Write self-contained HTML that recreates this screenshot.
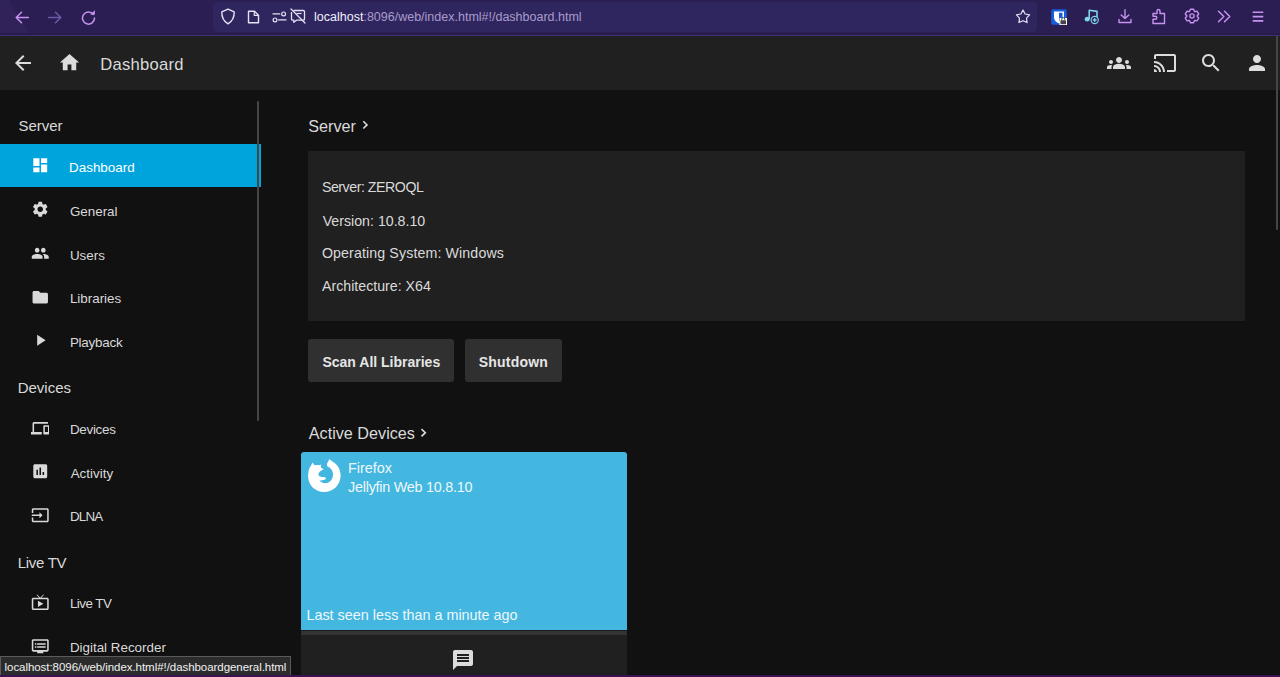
<!DOCTYPE html>
<html><head><meta charset="utf-8"><style>
html,body{margin:0;padding:0;width:1280px;height:677px;overflow:hidden;background:#111111;font-family:"Liberation Sans", sans-serif;}
svg{display:block}
</style></head><body>
<div style="position:absolute;left:0px;top:0px;width:1280px;height:35px;background:#2a1e52;"></div>
<svg style="position:absolute;left:0px;top:0px;" width="40" height="35" viewBox="0 0 40 35"><polygon points="0,0 9,0 30,35 0,35" fill="#31235a"/></svg>
<div style="position:absolute;left:0px;top:33px;width:1280px;height:2px;background:#271c4c;"></div>
<div style="position:absolute;left:0px;top:35px;width:1280px;height:1px;background:#3c3074;"></div>
<div style="position:absolute;left:213px;top:2px;width:824px;height:30px;background:#2f2660;border-radius:4px;"></div>
<svg style="position:absolute;left:15px;top:11px;" width="14" height="13" viewBox="0 0 14 13"><path d="M13.5 6.5H1.5M6.5 1.2L1.2 6.5L6.5 11.8" stroke="#c792f2" stroke-width="1.5" fill="none" stroke-linecap="round" stroke-linejoin="round"/></svg>
<svg style="position:absolute;left:48px;top:11px;" width="14" height="13" viewBox="0 0 14 13"><path d="M0.5 6.5H12.5M7.5 1.2L12.8 6.5L7.5 11.8" stroke="#6d5aa6" stroke-width="1.5" fill="none" stroke-linecap="round" stroke-linejoin="round"/></svg>
<svg style="position:absolute;left:81px;top:10px;" width="15" height="15" viewBox="0 0 15 15"><path d="M12.3 4.5A6 6 0 1 0 13.5 8" stroke="#c792f2" stroke-width="1.5" fill="none" stroke-linecap="round"/><path d="M9 4.6L13.9 4.6L13.9 0.2Z" fill="#c792f2"/></svg>
<svg style="position:absolute;left:220px;top:8px;" width="16" height="17" viewBox="0 0 16 17"><path d="M8 1.2L14.2 3.8C14.4 9.5 12 13.5 8 15.8C4 13.5 1.6 9.5 1.8 3.8Z" stroke="#e6e1f3" stroke-width="1.4" fill="none" stroke-linejoin="round"/></svg>
<svg style="position:absolute;left:247px;top:10px;" width="13" height="14" viewBox="0 0 13 14"><path d="M1.5 1.2H7.5L11.5 5.2V12.8H1.5Z" stroke="#e6e1f3" stroke-width="1.4" fill="none" stroke-linejoin="round"/><path d="M7.3 1.2V5.4H11.5" stroke="#e6e1f3" stroke-width="1.2" fill="none"/></svg>
<svg style="position:absolute;left:272px;top:11px;" width="15" height="12" viewBox="0 0 15 12"><path d="M1 2.9H7.8M6.6 8.9H14" stroke="#e6e1f3" stroke-width="1.2" fill="none" stroke-linecap="round"/><circle cx="11.6" cy="2.9" r="1.9" stroke="#e6e1f3" stroke-width="1.2" fill="none"/><circle cx="3" cy="8.9" r="1.9" stroke="#e6e1f3" stroke-width="1.2" fill="none"/></svg>
<svg style="position:absolute;left:290px;top:8px;" width="16" height="16" viewBox="0 0 16 16"><path d="M3.5 2.5H13.3C14 2.5 14.5 3 14.5 3.7V11C14.5 11.6 14 12.2 13.3 12.2H6.5L3.8 14.3V12.2H2.7C2 12.2 1.5 11.6 1.5 11V4" stroke="#e6e1f3" stroke-width="1.3" fill="none" stroke-linejoin="round"/><path d="M6.5 5.5H11.5" stroke="#e6e1f3" stroke-width="1.2"/><path d="M1 1L15 15" stroke="#e6e1f3" stroke-width="1.3" stroke-linecap="round"/></svg>
<div id="t0" style="position:absolute;left:314.10px;top:11.30px;font-size:12.5px;line-height:12.5px;color:#fff;font-weight:400;white-space:nowrap;"><span style="color:#f2eefa">localhost</span><span style="color:#a99ccb">:8096/web/index.html#!/dashboard.html</span></div>
<svg style="position:absolute;left:1012.8px;top:7.4px;" width="20" height="20" viewBox="0 0 20 20"><polygon points="10.00,3.10 12.17,7.01 16.56,7.87 13.52,11.14 14.06,15.58 10.00,13.70 5.94,15.58 6.48,11.14 3.44,7.87 7.83,7.01" stroke="#e6e1f3" stroke-width="1.2" fill="none" stroke-linejoin="round"/></svg>
<svg style="position:absolute;left:1051px;top:9px;" width="16" height="16" viewBox="0 0 16 16"><rect x="0.3" y="0.3" width="15.4" height="15.4" rx="1.5" fill="#175ddc"/><path d="M3 2.5H13V8.5C13 11.5 10.5 13.5 8 14.5C5.5 13.5 3 11.5 3 8.5Z" fill="#fff"/><path d="M8 3.8H11.5V8.6C11.5 10.6 9.8 12 8 12.8Z" fill="#175ddc"/><rect x="8.5" y="9" width="7.5" height="7" fill="#fff"/><rect x="9.5" y="11.2" width="5.5" height="4" rx="0.6" fill="#444"/><path d="M10.7 11.2V10.2A1.55 1.55 0 0 1 13.8 10.2V11.2" stroke="#444" stroke-width="1" fill="none"/></svg>
<svg style="position:absolute;left:1084px;top:9px;" width="16" height="16" viewBox="0 0 16 16"><path d="M5.2 10V1.2L13 2.4V8.5" stroke="#7fd3ea" stroke-width="1.6" fill="none" stroke-linejoin="round"/><ellipse cx="3.2" cy="10.2" rx="2.5" ry="2.4" fill="#7fd3ea"/><circle cx="10.7" cy="11" r="3.6" stroke="#7fd3ea" stroke-width="1.2" fill="#2a1e52"/><path d="M10.7 9.1V12.9M8.8 11H12.6" stroke="#7fd3ea" stroke-width="1.3"/></svg>
<svg style="position:absolute;left:1118px;top:9px;" width="14" height="15" viewBox="0 0 14 15"><path d="M7 0.8V9.5M3.2 6L7 9.6L10.8 6M1 10.5V13.5H13V10.5" stroke="#c792f2" stroke-width="1.4" fill="none" stroke-linecap="round" stroke-linejoin="round"/></svg>
<svg style="position:absolute;left:1151px;top:8px;" width="16" height="17" viewBox="0 0 16 17"><path d="M2 11.3H4.3C5.3 11.3 5.8 10.5 5.8 9.8C5.8 9 5.3 8.3 4.3 8.3H2V5.5H6V3.5C6 2.2 6.6 1.5 7.5 1.5C8.4 1.5 9 2.2 9 3.5V5.5H13.5V15.5H2Z" stroke="#c792f2" stroke-width="1.4" fill="none" stroke-linejoin="round"/></svg>
<svg style="position:absolute;left:1183.5px;top:8.3px;" width="16" height="16" viewBox="0 0 16 16"><polygon points="6.43,1.18 9.57,1.18 10.55,3.58 13.12,3.23 14.69,5.95 13.10,8.00 14.69,10.05 13.12,12.77 10.55,12.42 9.57,14.82 6.43,14.82 5.45,12.42 2.88,12.77 1.31,10.05 2.90,8.00 1.31,5.95 2.88,3.23 5.45,3.58" stroke="#c792f2" stroke-width="1.4" fill="none" stroke-linejoin="round"/><circle cx="8" cy="8" r="2.1" stroke="#c792f2" stroke-width="1.4" fill="none"/></svg>
<svg style="position:absolute;left:1217px;top:10px;" width="15" height="13" viewBox="0 0 15 13"><path d="M1.5 1.2L6.8 6.5L1.5 11.8M7.5 1.2L12.8 6.5L7.5 11.8" stroke="#c792f2" stroke-width="1.5" fill="none" stroke-linecap="round" stroke-linejoin="round"/></svg>
<svg style="position:absolute;left:1252px;top:11px;" width="12" height="11" viewBox="0 0 12 11"><path d="M0.7 1.3H11.3M0.7 5.6H11.3M0.7 9.9H11.3" stroke="#c792f2" stroke-width="1.6" fill="none"/></svg>
<div style="position:absolute;left:0px;top:36px;width:1280px;height:54px;background:#202020;"></div>
<svg style="position:absolute;left:11.2px;top:50.6px;" width="24" height="24" viewBox="0 0 24 24"><path fill="#dcdcdc" d="M20 11H7.83l5.59-5.59L12 4l-8 8 8 8 1.41-1.41L7.83 13H20v-2z"/></svg>
<svg style="position:absolute;left:57.7px;top:51.2px;" width="23" height="23" viewBox="0 0 24 24"><path fill="#dcdcdc" d="M10 20v-6h4v6h5v-8h3L12 3 2 12h3v8z"/></svg>
<div id="t1" style="position:absolute;left:100.20px;top:56.57px;font-size:16.6px;line-height:16.6px;color:#dadada;font-weight:400;white-space:nowrap;letter-spacing:0.27px;">Dashboard</div>
<svg style="position:absolute;left:1107px;top:51px;" width="24" height="24" viewBox="0 0 24 24"><path fill="#dcdcdc" d="M12 12.75c1.63 0 3.07.39 4.24.9 1.08.48 1.76 1.56 1.76 2.73V18H6v-1.61c0-1.18.68-2.26 1.76-2.73 1.17-.52 2.61-.91 4.24-.91zM4 13c1.1 0 2-.9 2-2s-.9-2-2-2-2 .9-2 2 .9 2 2 2zm1.13 1.1c-.37-.06-.74-.1-1.13-.1-.99 0-1.93.21-2.78.58C.48 14.9 0 15.62 0 16.43V18h4.5v-1.61c0-.83.23-1.61.63-2.29zM20 13c1.1 0 2-.9 2-2s-.9-2-2-2-2 .9-2 2 .9 2 2 2zm4 3.43c0-.81-.48-1.53-1.22-1.85-.85-.37-1.79-.58-2.78-.58-.39 0-.76.04-1.13.1.4.68.63 1.46.63 2.29V18H24v-1.57zM12 6c1.66 0 3 1.34 3 3s-1.34 3-3 3-3-1.34-3-3 1.34-3 3-3z"/></svg>
<svg style="position:absolute;left:1153px;top:51px;" width="24" height="24" viewBox="0 0 24 24"><path fill="#dcdcdc" d="M21 3H3c-1.1 0-2 .9-2 2v3h2V5h18v14h-7v2h7c1.1 0 2-.9 2-2V5c0-1.1-.9-2-2-2zM1 18v3h3c0-1.66-1.34-3-3-3zm0-4v2c2.76 0 5 2.24 5 5h2c0-3.87-3.13-7-7-7zm0-4v2c4.97 0 9 4.03 9 9h2c0-6.08-4.93-11-11-11z"/></svg>
<svg style="position:absolute;left:1199px;top:51px;" width="24" height="24" viewBox="0 0 24 24"><path fill="#dcdcdc" d="M15.5 14h-.79l-.28-.27C15.41 12.59 16 11.11 16 9.5 16 5.91 13.09 3 9.5 3S3 5.91 3 9.5 5.91 16 9.5 16c1.61 0 3.09-.59 4.23-1.57l.27.28v.79l5 4.99L20.49 19l-4.99-5zm-6 0C7.01 14 5 11.99 5 9.5S7.01 5 9.5 5 14 7.01 14 9.5 11.99 14 9.5 14z"/></svg>
<svg style="position:absolute;left:1245px;top:51px;" width="24" height="24" viewBox="0 0 24 24"><path fill="#dcdcdc" d="M12 12c2.21 0 4-1.79 4-4s-1.79-4-4-4-4 1.79-4 4 1.79 4 4 4zm0 2c-2.67 0-8 1.34-8 4v2h16v-2c0-2.66-5.33-4-8-4z"/></svg>
<div style="position:absolute;left:0px;top:90px;width:1280px;height:585px;background:#111111;"></div>
<div id="t2" style="position:absolute;left:18.44px;top:117.65px;font-size:15px;line-height:15px;color:#d9d9d9;font-weight:400;white-space:nowrap;">Server</div>
<div style="position:absolute;left:0px;top:144px;width:261px;height:43px;background:#00a4dc;"></div>
<svg style="position:absolute;left:30.60px;top:156.35px;" width="18.5" height="18.5" viewBox="0 0 24 24"><path fill="#ffffff" d="M3 13h8V3H3v10zm0 8h8v-6H3v6zm10 0h8V11h-8v10zm0-18v6h8V3h-8z"/></svg>
<div id="t3" style="position:absolute;left:69.08px;top:160.57px;font-size:13.4px;line-height:13.4px;color:#ffffff;font-weight:400;white-space:nowrap;">Dashboard</div>
<svg style="position:absolute;left:30.60px;top:200.20px;" width="18.5" height="18.5" viewBox="0 0 24 24"><path fill="#d9d9d9" d="M19.14 12.94c.04-.3.06-.61.06-.94 0-.32-.02-.64-.07-.94l2.03-1.58c.18-.14.23-.41.12-.61l-1.92-3.32c-.12-.22-.37-.29-.59-.22l-2.39.96c-.5-.38-1.03-.7-1.62-.94l-.36-2.54c-.04-.24-.24-.41-.48-.41h-3.84c-.24 0-.43.17-.47.41l-.36 2.54c-.59.24-1.13.57-1.62.94l-2.39-.96c-.22-.08-.47 0-.59.22L2.74 8.87c-.12.21-.08.47.12.61l2.03 1.58c-.05.3-.09.63-.09.94s.02.64.07.94l-2.03 1.58c-.18.14-.23.41-.12.61l1.92 3.32c.12.22.37.29.59.22l2.39-.96c.5.38 1.03.7 1.62.94l.36 2.54c.05.24.24.41.48.41h3.84c.24 0 .44-.17.47-.41l.36-2.54c.59-.24 1.13-.56 1.62-.94l2.39.96c.22.08.47 0 .59-.22l1.92-3.32c.12-.22.07-.47-.12-.61l-2.01-1.58zM12 15.6c-1.98 0-3.6-1.62-3.6-3.6s1.62-3.6 3.6-3.6 3.6 1.62 3.6 3.6-1.62 3.6-3.6 3.6z"/></svg>
<div id="t4" style="position:absolute;left:69.88px;top:204.86px;font-size:13.4px;line-height:13.4px;color:#d9d9d9;font-weight:400;white-space:nowrap;">General</div>
<svg style="position:absolute;left:30.60px;top:243.95px;" width="18.5" height="18.5" viewBox="0 0 24 24"><path fill="#d9d9d9" d="M16 11c1.66 0 2.99-1.34 2.99-3S17.66 5 16 5c-1.66 0-3 1.34-3 3s1.34 3 3 3zm-8 0c1.66 0 2.99-1.34 2.99-3S9.66 5 8 5C6.34 5 5 6.34 5 8s1.34 3 3 3zm0 2c-2.33 0-7 1.17-7 3.5V19h14v-2.5c0-2.33-4.67-3.5-7-3.5zm8 0c-.29 0-.62.02-.97.05 1.16.84 1.97 1.97 1.97 3.45V19h6v-2.5c0-2.33-4.67-3.5-7-3.5z"/></svg>
<div id="t5" style="position:absolute;left:69.88px;top:248.81px;font-size:13.4px;line-height:13.4px;color:#d9d9d9;font-weight:400;white-space:nowrap;">Users</div>
<svg style="position:absolute;left:30.60px;top:287.65px;" width="18.5" height="18.5" viewBox="0 0 24 24"><path fill="#d9d9d9" d="M10 4H4c-1.1 0-1.99.9-1.99 2L2 18c0 1.1.9 2 2 2h16c1.1 0 2-.9 2-2V8c0-1.1-.9-2-2-2h-8l-2-2z"/></svg>
<div id="t6" style="position:absolute;left:69.88px;top:291.79px;font-size:13.4px;line-height:13.4px;color:#d9d9d9;font-weight:400;white-space:nowrap;">Libraries</div>
<svg style="position:absolute;left:30.60px;top:331.40px;" width="18.5" height="18.5" viewBox="0 0 24 24"><path fill="#d9d9d9" d="M8 5v14l11-7z"/></svg>
<div id="t7" style="position:absolute;left:69.88px;top:335.74px;font-size:13.4px;line-height:13.4px;color:#d9d9d9;font-weight:400;white-space:nowrap;letter-spacing:-0.23px;">Playback</div>
<svg style="position:absolute;left:30.60px;top:418.50px;" width="18.5" height="18.5" viewBox="0 0 24 24"><path fill="#d9d9d9" d="M4 6h18V4H4c-1.1 0-2 .9-2 2v11H0v3h14v-3H4V6zm19 2h-6c-.55 0-1 .45-1 1v10c0 .55.45 1 1 1h6c.55 0 1-.45 1-1V9c0-.55-.45-1-1-1zm-1 9h-4v-7h4v7z"/></svg>
<div id="t8" style="position:absolute;left:69.88px;top:423.08px;font-size:13.4px;line-height:13.4px;color:#d9d9d9;font-weight:400;white-space:nowrap;letter-spacing:-0.27px;">Devices</div>
<svg style="position:absolute;left:30.60px;top:462.25px;" width="18.5" height="18.5" viewBox="0 0 24 24"><path fill="#d9d9d9" d="M19 3H5c-1.1 0-2 .9-2 2v14c0 1.1.9 2 2 2h14c1.1 0 2-.9 2-2V5c0-1.1-.9-2-2-2zM9 17H7v-7h2v7zm4 0h-2V7h2v10zm4 0h-2v-4h2v4z"/></svg>
<div id="t9" style="position:absolute;left:70.68px;top:467.03px;font-size:13.4px;line-height:13.4px;color:#d9d9d9;font-weight:400;white-space:nowrap;">Activity</div>
<svg style="position:absolute;left:30.60px;top:506.00px;" width="18.5" height="18.5" viewBox="0 0 24 24"><path fill="#d9d9d9" d="M21 3.01H3c-1.1 0-2 .9-2 2V9h2V4.99h18v14.03H3V15H1v4.01c0 1.1.9 1.98 2 1.98h18c1.1 0 2-.88 2-1.98v-14c0-1.11-.9-2-2-2zM11 16l4-4-4-4v3H1v2h10v3z"/></svg>
<div id="t10" style="position:absolute;left:69.88px;top:510.18px;font-size:13.4px;line-height:13.4px;color:#d9d9d9;font-weight:400;white-space:nowrap;letter-spacing:-0.8px;">DLNA</div>
<svg style="position:absolute;left:30.60px;top:593.00px;" width="18.5" height="18.5" viewBox="0 0 24 24"><path fill="#d9d9d9" d="M21 6h-7.59l3.29-3.29L16 2l-4 4-4-4-.71.71L10.59 6H3c-1.1 0-2 .89-2 2v12c0 1.1.9 2 2 2h18c1.1 0 2-.9 2-2V8c0-1.11-.9-2-2-2zm0 14H3V8h18v12zM9 10v8l7-4z"/></svg>
<div id="t11" style="position:absolute;left:69.88px;top:597.18px;font-size:13.4px;line-height:13.4px;color:#d9d9d9;font-weight:400;white-space:nowrap;letter-spacing:-0.53px;">Live TV</div>
<svg style="position:absolute;left:30.60px;top:636.75px;" width="18.5" height="18.5" viewBox="0 0 24 24"><path fill="#d9d9d9" d="M21 3H3c-1.1 0-2 .9-2 2v12c0 1.1.9 2 2 2h5v2h8v-2h5c1.1 0 1.99-.9 1.99-2L23 5c0-1.1-.9-2-2-2zm0 14H3V5h18v12zm-2-9H8v2h11V8zm0 4H8v2h11v-2zM7 8H5v2h2V8zm0 4H5v2h2v-2z"/></svg>
<div id="t12" style="position:absolute;left:69.88px;top:641.13px;font-size:13.4px;line-height:13.4px;color:#d9d9d9;font-weight:400;white-space:nowrap;">Digital Recorder</div>
<div id="t13" style="position:absolute;left:17.64px;top:380.23px;font-size:15px;line-height:15px;color:#d9d9d9;font-weight:400;white-space:nowrap;">Devices</div>
<div id="t14" style="position:absolute;left:17.64px;top:555.45px;font-size:15px;line-height:15px;color:#d9d9d9;font-weight:400;white-space:nowrap;letter-spacing:-0.28px;">Live TV</div>
<div style="position:absolute;left:257px;top:101px;width:2px;height:320px;background:#464646;border-radius:1px;"></div>
<div id="t15" style="position:absolute;left:308.32px;top:117.67px;font-size:16.2px;line-height:16.2px;color:#dadada;font-weight:400;white-space:nowrap;">Server</div>
<svg style="position:absolute;left:361px;top:119px;" width="9" height="12" viewBox="0 0 9 12"><path d="M2.3 2.3L6 5.9L2.3 9.5" stroke="#dadada" stroke-width="1.6" fill="none"/></svg>
<div style="position:absolute;left:308px;top:151px;width:937px;height:170px;background:#202020;"></div>
<div id="t16" style="position:absolute;left:321.88px;top:180.24px;font-size:14.2px;line-height:14.2px;color:#dadada;font-weight:400;white-space:nowrap;letter-spacing:-0.46px;">Server: ZEROQL</div>
<div id="t17" style="position:absolute;left:322.68px;top:214.02px;font-size:14.2px;line-height:14.2px;color:#dadada;font-weight:400;white-space:nowrap;">Version: 10.8.10</div>
<div id="t18" style="position:absolute;left:321.88px;top:246.21px;font-size:14.2px;line-height:14.2px;color:#dadada;font-weight:400;white-space:nowrap;letter-spacing:0.125px;">Operating System: Windows</div>
<div id="t19" style="position:absolute;left:322.00px;top:279.11px;font-size:14.2px;line-height:14.2px;color:#dadada;font-weight:400;white-space:nowrap;">Architecture: X64</div>
<div style="position:absolute;left:308px;top:339px;width:146px;height:43px;background:#303030;border-radius:3px;"></div>
<div style="position:absolute;left:465px;top:339px;width:97px;height:43px;background:#303030;border-radius:3px;"></div>
<div id="t20" style="position:absolute;left:322.44px;top:354.59px;font-size:14px;line-height:14px;color:#e6e6e6;font-weight:700;white-space:nowrap;">Scan All Libraries</div>
<div id="t21" style="position:absolute;left:478.66px;top:354.59px;font-size:14px;line-height:14px;color:#e6e6e6;font-weight:700;white-space:nowrap;letter-spacing:0.23px;">Shutdown</div>
<div id="t22" style="position:absolute;left:308.78px;top:424.55px;font-size:16.2px;line-height:16.2px;color:#dadada;font-weight:400;white-space:nowrap;">Active Devices</div>
<svg style="position:absolute;left:418.5px;top:427px;" width="9" height="12" viewBox="0 0 9 12"><path d="M2.5 2.1L6.3 5.7L2.5 9.3" stroke="#dadada" stroke-width="1.6" fill="none"/></svg>
<div style="position:absolute;left:301px;top:452px;width:326px;height:178px;background:#43b7e0;border-radius:3px 3px 0 0;"></div>
<div style="position:absolute;left:301px;top:630px;width:326px;height:1px;background:#1c1c1c;"></div>
<div style="position:absolute;left:301px;top:631px;width:326px;height:4px;background:#333333;"></div>
<div style="position:absolute;left:301px;top:635px;width:326px;height:40px;background:#202020;"></div>
<svg style="position:absolute;left:304px;top:455px;" width="40" height="40" viewBox="0 0 40 40"><path fill="#ffffff" d="M25.4 3.9C27.3 5.8 29 7 30.4 7.7C34.3 10.8 36.8 15.3 36.6 20.7C36.4 30 29 37 20.3 37C11 37 4 30 4.1 21C4.2 16 5.4 12.7 7 10.6L8.6 7.4L10.5 10.3C12.5 9.9 14.5 9.9 16 10.2L17.6 9.1L16.8 12.3L19.8 14.3Z"/><path fill="#43b7e0" d="M19.8 14.3C17.5 15.5 14.5 17 14.5 19.5C14.5 21.5 17 22 20 22C22 22.5 22.5 23.5 21.5 24.3C19.5 25.5 17 25.5 15.5 25.6C17 27.5 19 28.3 21 28.3C25.5 28.3 29 24.5 29 19.5C29 15.5 26.5 12.5 23.5 11.5C22.8 10.5 23 8 23.6 6.5L25.4 3.9L20 8.5L17.6 9.1L16.8 12.3Z"/></svg>
<div id="t23" style="position:absolute;left:348.08px;top:461.36px;font-size:14.4px;line-height:14.4px;color:#eef8fc;font-weight:400;white-space:nowrap;">Firefox</div>
<div id="t24" style="position:absolute;left:348.10px;top:480.43px;font-size:14.4px;line-height:14.4px;color:#eef8fc;font-weight:400;white-space:nowrap;letter-spacing:-0.26px;">Jellyfin Web 10.8.10</div>
<div id="t25" style="position:absolute;left:306.42px;top:608.36px;font-size:14.4px;line-height:14.4px;color:#eef8fc;font-weight:400;white-space:nowrap;">Last seen less than a minute ago</div>
<svg style="position:absolute;left:451.30px;top:648.15px;" width="24" height="24" viewBox="0 0 24 24"><path fill="#dcdcdc" d="M20 2H4c-1.1 0-1.99.9-1.99 2L2 22l4-4h14c1.1 0 2-.9 2-2V4c0-1.1-.9-2-2-2zm-2 12H6v-2h12v2zm0-3H6V9h12v2zm0-3H6V6h12v2z"/></svg>
<div style="position:absolute;left:1276px;top:36px;width:2px;height:194px;background:#464646;border-radius:1px;"></div>
<div style="position:absolute;left:0px;top:656px;width:291px;height:19px;background:#2b2b2b;box-sizing:border-box;border:1px solid #5b5b5b;border-bottom:none;"></div>
<div id="t26" style="position:absolute;left:4.54px;top:661.87px;font-size:11.5px;line-height:11.5px;color:#f2f2f2;font-weight:400;white-space:nowrap;letter-spacing:-0.05px;">localhost:8096/web/index.html#!/dashboardgeneral.html</div>
<div style="position:absolute;left:0px;top:675px;width:1280px;height:2px;background:#3b0f50;"></div>
</body></html>
